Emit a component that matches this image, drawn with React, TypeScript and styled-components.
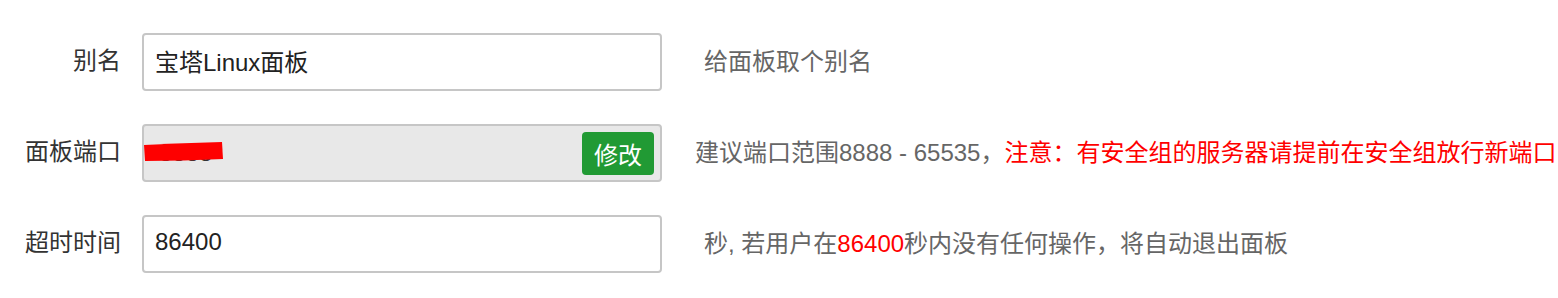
import { FC, ReactNode } from "react";
import styled, { createGlobalStyle } from "styled-components";

const GlobalStyle = createGlobalStyle`
  body {
    margin: 0;
    background: #fff;
    font-family: "Liberation Sans", "Noto Sans CJK SC", sans-serif;
  }
`;

const SForm = styled.div`
  display: grid;
  grid-auto-rows: 58px;
  row-gap: 33px;
  padding-top: 33px;
`;

const SRow = styled.div`
  display: flex;
  align-items: center;
`;

const SLabel = styled.label`
  width: 121px;
  margin-right: 21px;
  flex-shrink: 0;
  text-align: right;
  font-size: 24px;
  color: #333;
  margin-top: -7px;
`;

const SInputBox = styled.div<{ $disabled?: boolean }>`
  position: relative;
  box-sizing: border-box;
  width: 520px;
  height: 58px;
  flex-shrink: 0;
  display: flex;
  align-items: center;
  justify-content: space-between;
  padding: 0 6px 4px 11px;
  border: 2px solid #c6c6c6;
  border-radius: 4px;
  background: ${(p) => (p.$disabled ? "#e8e8e8" : "#fff")};
  font-size: 24px;
  color: #222;
`;

const SPort = styled.span`
  padding-left: 4px;
  margin-top: 4px;
  color: #333;
`;

const SButton = styled.button`
  box-sizing: border-box;
  width: 72px;
  height: 43px;
  margin-top: 4px;
  border: none;
  border-radius: 4px;
  background: #219a34;
  color: #fff;
  font-family: inherit;
  font-size: 24px;
  padding: 0;
`;

const SRedact = styled.svg`
  position: absolute;
  left: 0;
  top: 16px;
`;

const SHelp = styled.span<{ $offset: number }>`
  margin-left: ${(p) => p.$offset}px;
  margin-top: -6px;
  font-size: 24px;
  color: #666;
  white-space: nowrap;
`;

const SWarn = styled.span`
  color: #f00;
`;

interface FieldProps {
  label: string;
  children: ReactNode;
}

const Field: FC<FieldProps> = ({ label, children }) => (
  <SRow>
    <SLabel>{label}</SLabel>
    {children}
  </SRow>
);

const App = () => (
  <>
    <GlobalStyle />
    <SForm>
      <Field label="别名">
        <SInputBox>宝塔Linux面板</SInputBox>
        <SHelp $offset={42}>给面板取个别名</SHelp>
      </Field>
      <Field label="面板端口">
        <SInputBox $disabled>
          <SPort>8888</SPort>
          <SRedact width="80" height="22" viewBox="0 0 80 22">
            <path d="M0 3 Q40 1 78 0 L79 17 Q40 19 1 19 Z" fill="#fe0000" />
          </SRedact>
          <SButton>修改</SButton>
        </SInputBox>
        <SHelp $offset={33}>
          建议端口范围8888 - 65535，
          <SWarn>注意：有安全组的服务器请提前在安全组放行新端口</SWarn>
        </SHelp>
      </Field>
      <Field label="超时时间">
        <SInputBox>86400</SInputBox>
        <SHelp $offset={42}>
          秒, 若用户在<SWarn>86400</SWarn>秒内没有任何操作，将自动退出面板
        </SHelp>
      </Field>
    </SForm>
  </>
);

export default App;
